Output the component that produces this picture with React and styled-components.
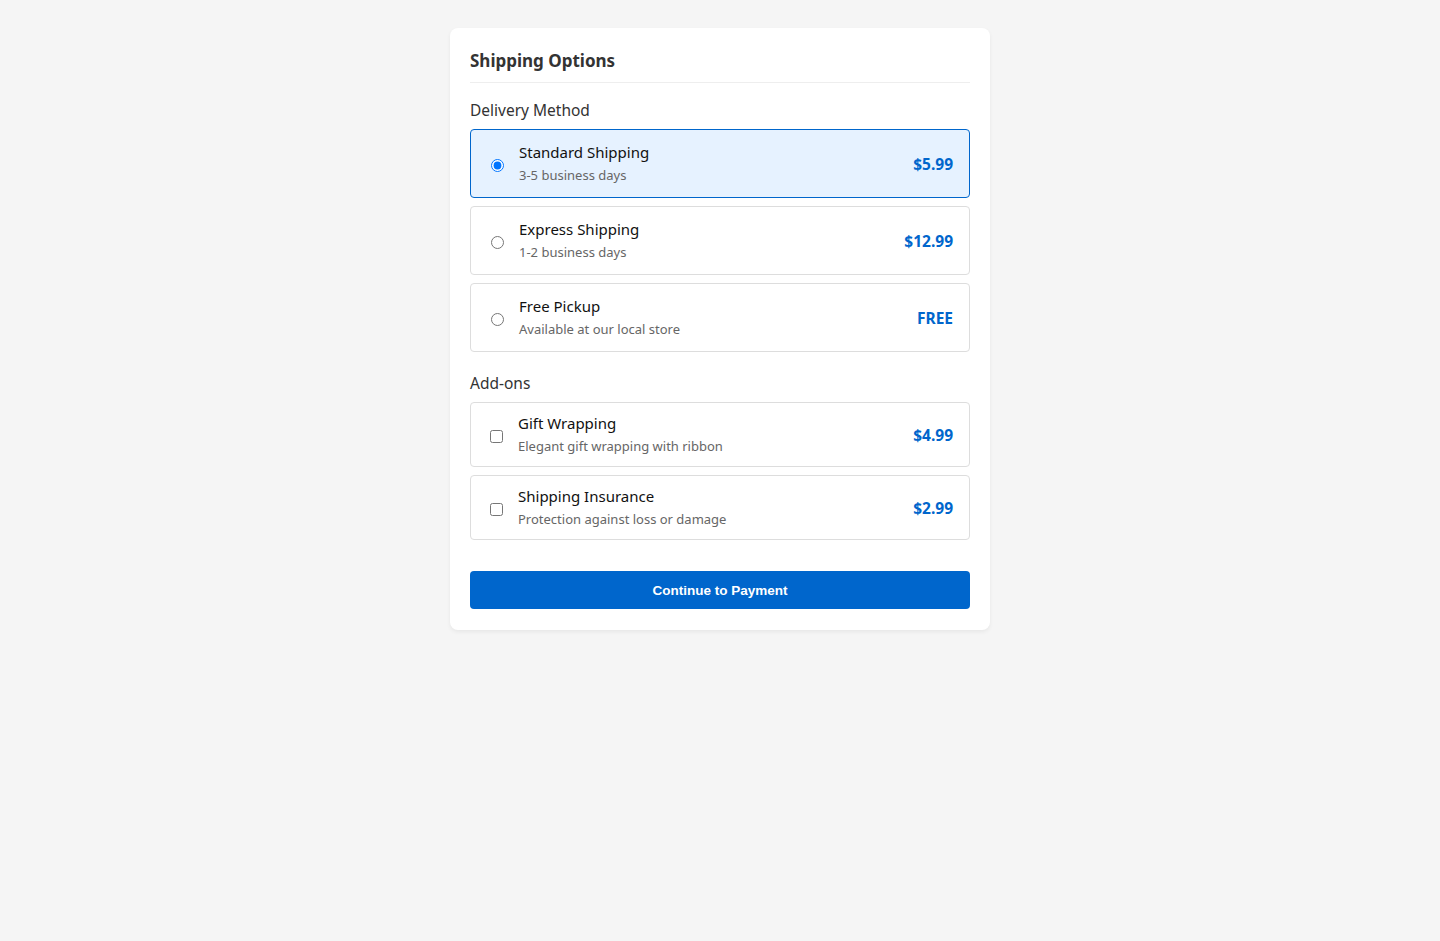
import React, { useState } from 'react'
import styled, { createGlobalStyle } from 'styled-components'

const GlobalStyle = createGlobalStyle`
  * { box-sizing: border-box; }
  body {
    margin: 0;
    background: #f5f5f5;
    font-family: "Noto Sans", "Open Sans", sans-serif;
  }
`

const deliveryOptions = [
  { id: 'standard', title: 'Standard Shipping', desc: '3-5 business days', price: '$5.99' },
  { id: 'express', title: 'Express Shipping', desc: '1-2 business days', price: '$12.99' },
  { id: 'pickup', title: 'Free Pickup', desc: 'Available at our local store', price: 'FREE' },
]

const addOns = [
  { id: 'gift', title: 'Gift Wrapping', desc: 'Elegant gift wrapping with ribbon', price: '$4.99' },
  { id: 'insurance', title: 'Shipping Insurance', desc: 'Protection against loss or damage', price: '$2.99' },
]

const App = () => {
  const [method, setMethod] = useState('standard')
  const [extras, setExtras] = useState({})

  return (
    <>
      <GlobalStyle />
      <Page>
        <Card>
          <Title>Shipping Options</Title>

          <Section>
            <SectionLabel>Delivery Method</SectionLabel>
            <OptionList>
              {deliveryOptions.map((opt) => (
                <Option key={opt.id} $selected={method === opt.id}>
                  <input
                    type="radio"
                    name="delivery"
                    checked={method === opt.id}
                    onChange={() => setMethod(opt.id)}
                  />
                  <OptionText>
                    <OptionTitle>{opt.title}</OptionTitle>
                    <OptionDesc>{opt.desc}</OptionDesc>
                  </OptionText>
                  <Price>{opt.price}</Price>
                </Option>
              ))}
            </OptionList>
          </Section>

          <Section>
            <SectionLabel>Add-ons</SectionLabel>
            <OptionList>
              {addOns.map((opt) => (
                <Option key={opt.id} $compact $selected={!!extras[opt.id]}>
                  <input
                    type="checkbox"
                    checked={!!extras[opt.id]}
                    onChange={() => setExtras({ ...extras, [opt.id]: !extras[opt.id] })}
                  />
                  <OptionText>
                    <OptionTitle>{opt.title}</OptionTitle>
                    <OptionDesc>{opt.desc}</OptionDesc>
                  </OptionText>
                  <Price>{opt.price}</Price>
                </Option>
              ))}
            </OptionList>
          </Section>

          <ContinueBtn type="button">Continue to Payment</ContinueBtn>
        </Card>
      </Page>
    </>
  )
}

export default App

const Page = styled.div`
  min-height: 941px;
  padding-top: 28px;
  display: flex;
  justify-content: center;
  align-items: flex-start;
`

const Card = styled.div`
  width: 540px;
  padding: 20px 20px 21px;
  background: #fff;
  border-radius: 8px;
  box-shadow: 0 2px 4px rgba(0, 0, 0, 0.06);
`

const Title = styled.h2`
  margin: 0;
  padding-bottom: 8px;
  font-size: 17px;
  line-height: 26px;
  font-weight: 700;
  color: #333;
  border-bottom: 1px solid #eee;
`

const Section = styled.div`
  margin-top: 16px;
  & + & {
    margin-top: 20px;
  }
`

const SectionLabel = styled.div`
  font-size: 15.5px;
  line-height: 22px;
  color: #333;
  margin-bottom: 8px;
`

const OptionList = styled.div`
  display: flex;
  flex-direction: column;
  gap: 8px;
`

const Option = styled.label`
  display: flex;
  align-items: center;
  gap: 12px;
  padding: ${(p) => (p.$compact ? '10px 16px' : '12px 16px')};
  border: 1px solid ${(p) => (p.$selected ? '#0066cc' : '#ddd')};
  background: ${(p) => (p.$selected ? '#e6f2ff' : '#fff')};
  border-radius: 4px;
  cursor: pointer;
  input {
    margin: 3px 3px 0 ${(p) => (p.$compact ? '3px' : '4px')};
  }
`

const OptionText = styled.div`
  flex: 1;
  display: flex;
  flex-direction: column;
  gap: 3px;
`

const OptionTitle = styled.div`
  font-size: 15px;
  line-height: 21px;
  color: #111;
`

const OptionDesc = styled.div`
  font-size: 13px;
  line-height: 19px;
  color: #666;
`

const Price = styled.div`
  font-size: 15.5px;
  font-weight: 700;
  color: #0066cc;
`

const ContinueBtn = styled.button`
  display: block;
  width: 100%;
  height: 38px;
  margin-top: 31px;
  border: none;
  border-radius: 4px;
  background: #0066cc;
  color: #fff;
  font-family: "Liberation Sans", Arial, sans-serif;
  font-size: 13.5px;
  font-weight: 700;
  cursor: pointer;
`
